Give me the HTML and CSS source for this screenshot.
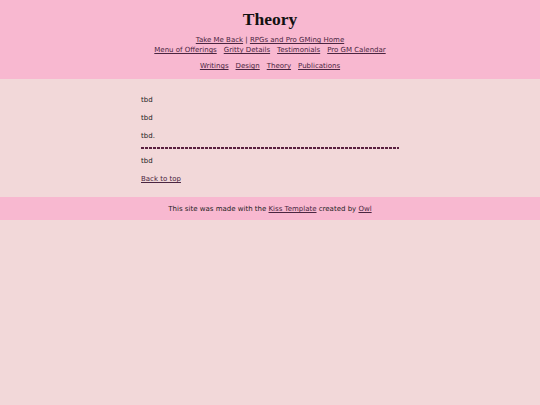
FILE: index.html
```html
<!DOCTYPE html>
<html>
<head>
<meta charset="utf-8">
<link rel="stylesheet" href="styles.css">
</head>
<body>
<header class="top">
  <h1 class="title">Theory</h1>
  <div class="nav1"><a href="#">Take Me Back</a> | <a href="#">RPGs and Pro GMing Home</a></div>
  <div class="nav2"><a href="#">Menu of Offerings</a><a href="#">Gritty Details</a><a href="#">Testimonials</a><a href="#">Pro GM Calendar</a></div>
  <div class="nav3"><a href="#">Writings</a><a href="#">Design</a><a href="#">Theory</a><a href="#">Publications</a></div>
</header>
<main class="content">
  <p>tbd</p>
  <p>tbd</p>
  <p class="pre">tbd.</p>
  <hr class="rule">
  <p>tbd</p>
  <p class="end"><a href="#">Back to top</a></p>
</main>
<footer class="bottom">This site was made with the <a href="#">Kiss Template</a> created by <a href="#">Owl</a></footer>
</body>
</html>
```
FILE: styles.css
```css
html, body { margin: 0; padding: 0; }
body {
  background: #f2d8d9;
  font-family: "DejaVu Sans", sans-serif;
  font-size: 7px;
  color: #222;
}
a { color: #4a2540; text-decoration: underline; }
.top {
  background: #f8b8d0;
  text-align: center;
  padding: 8px 0 8px;
}
.title {
  font-family: "Liberation Serif", serif;
  font-size: 17.5px;
  font-weight: bold;
  color: #111;
  margin: 0 0 4px;
  line-height: 23px;
}
.nav1, .nav2, .nav3 { line-height: 10px; }
.nav2 a, .nav3 a { margin: 0 3.5px; }
.nav3 { margin-top: 6px; }
.content {
  width: 258px;
  margin: 0 auto;
  padding: 16px 0 13px;
}
.content p { margin: 0 0 8px; line-height: 10px; }
.content p.pre { margin-bottom: 6px; }
.content p.end { margin-bottom: 0; }
.rule {
  border: none;
  height: 2px;
  background: repeating-linear-gradient(to right, #5a2040 0, #5a2040 3px, transparent 3px, transparent 4px);
  margin: 0 0 7px;
}
.bottom {
  background: #f8b8d0;
  text-align: center;
  padding: 7px 0 6px;
  line-height: 10px;
}
```
